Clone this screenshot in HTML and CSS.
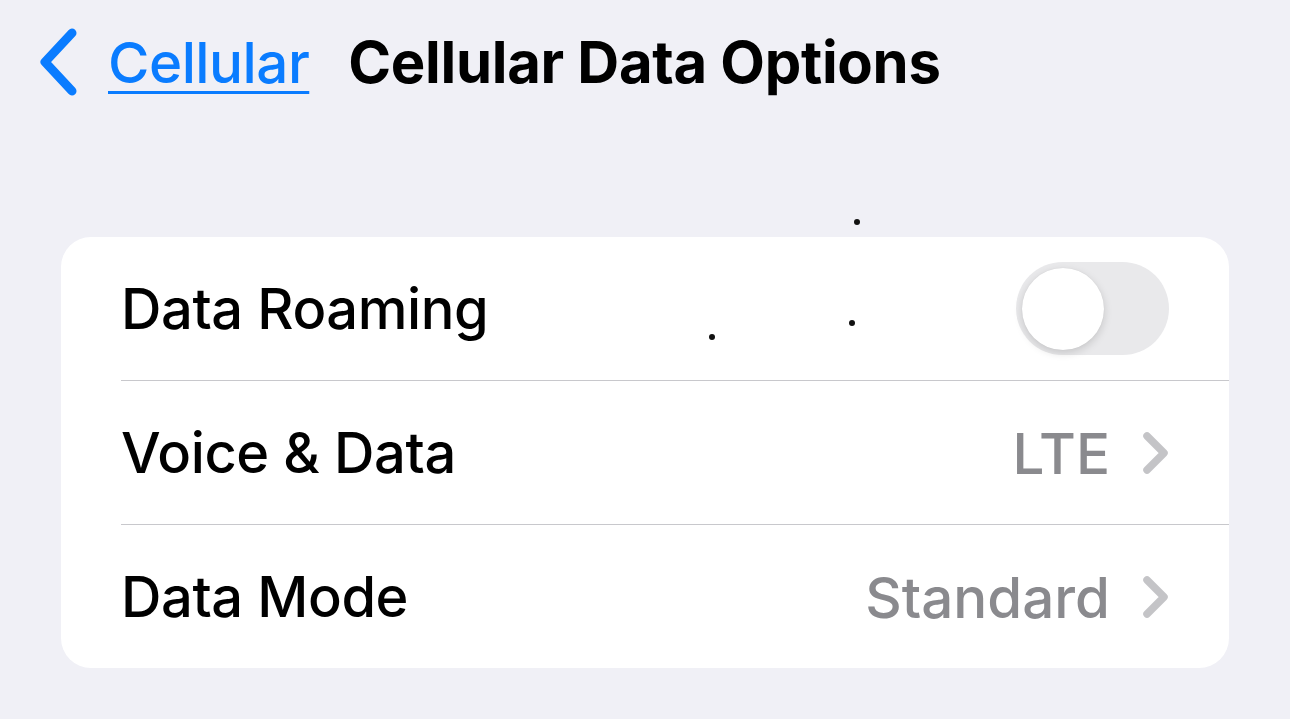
FILE: index.html
```html
<!DOCTYPE html>
<html lang="en">
<head>
  <meta charset="UTF-8" />
  <title>Cellular Data Options</title>
  <link rel="stylesheet" href="styles.css">
</head>
<body>

  <div class="navbar">
    <a class="voltar" href="#">
      <svg class="voltar-icone" width="44" height="70" viewBox="0 0 44 70">
        <path d="M36 6 L9 35 L36 64" fill="none" stroke="#0a7cff" stroke-width="9" stroke-linecap="round" stroke-linejoin="round" />
      </svg>
      <span class="voltar-texto">Cellular</span>
    </a>
    <h1 class="titulo">Cellular Data Options</h1>
  </div>

  <div class="lista">
    <div class="linha">
      <span class="rotulo">Data Roaming</span>
      <div class="chave"><div class="bolinha"></div></div>
    </div>
    <div class="linha">
      <span class="rotulo">Voice &amp; Data</span>
      <span class="valor">LTE</span>
      <svg class="seta" width="30" height="46" viewBox="0 0 30 46">
        <path d="M6 6 L23 23 L6 40" fill="none" stroke="#c4c4c7" stroke-width="7.5" stroke-linecap="round" stroke-linejoin="round" />
      </svg>
    </div>
    <div class="linha">
      <span class="rotulo">Data Mode</span>
      <span class="valor">Standard</span>
      <svg class="seta" width="30" height="46" viewBox="0 0 30 46">
        <path d="M6 6 L23 23 L6 40" fill="none" stroke="#c4c4c7" stroke-width="7.5" stroke-linecap="round" stroke-linejoin="round" />
      </svg>
    </div>
  </div>

  <span class="ponto" style="left: 854px; top: 219px;"></span>
  <span class="ponto" style="left: 709px; top: 334px;"></span>
  <span class="ponto" style="left: 849px; top: 320px;"></span>

</body>
</html>
```

FILE: styles.css
```css
body {
  font-family: Inter, "Noto Sans", sans-serif;
  background-color: #f0f0f6;
  margin: 0;
  padding: 0 61px 0 61px;
  position: relative;
  height: 719px;
  overflow: hidden;
}

.navbar {
  display: flex;
  align-items: center;
  gap: 39px;
  height: 124px;
  margin-left: -25px;
}

.voltar {
  display: flex;
  align-items: center;
  gap: 28px;
  text-decoration: none;
  color: #0a7cff;
}

.voltar-texto {
  font-size: 56.5px;
  font-weight: 500;
  letter-spacing: -0.5px;
  text-decoration: underline;
  text-decoration-thickness: 3px;
  text-underline-offset: 8px;
}

.titulo {
  margin: 0;
  font-size: 58px;
  font-weight: 700;
  letter-spacing: -0.3px;
  color: #000;
}

.lista {
  margin-top: 113px;
  background-color: #fff;
  border-radius: 30px;
  padding-left: 60px;
}

.linha {
  display: flex;
  align-items: center;
  height: 143px;
  padding-right: 60px;
  border-bottom: 1px solid #c8c8cc;
}

.linha:last-child {
  border-bottom: none;
}

.rotulo {
  flex: 1;
  font-size: 56px;
  font-weight: 500;
  letter-spacing: -0.4px;
  color: #000;
  padding-top: 1px;
}

.valor {
  font-size: 56.5px;
  font-weight: 500;
  color: #8a8a8e;
  margin-right: 31px;
  padding-top: 1px;
}

.seta {
  margin-right: -2px;
}

.chave {
  width: 153px;
  height: 93px;
  border-radius: 47px;
  background-color: #e9e9eb;
  display: flex;
  align-items: center;
  padding-left: 6px;
  box-sizing: border-box;
}

.bolinha {
  width: 82px;
  height: 82px;
  border-radius: 50%;
  background-color: #fff;
  box-shadow: 0 3px 8px rgba(0, 0, 0, 0.15), 0 0 1px rgba(0, 0, 0, 0.1);
}

.ponto {
  position: absolute;
  width: 6px;
  height: 6px;
  border-radius: 50%;
  background-color: #111;
}
```
